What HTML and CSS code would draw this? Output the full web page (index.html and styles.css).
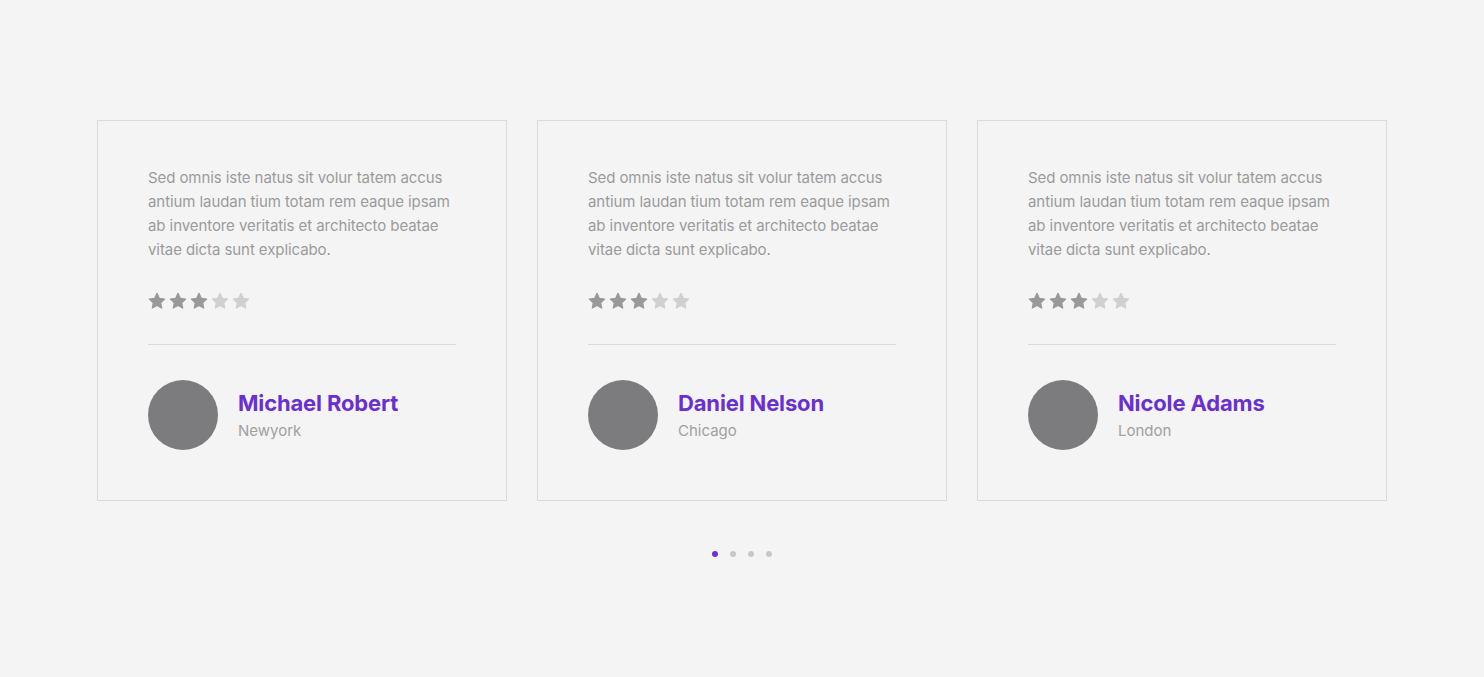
FILE: index.html
```html
<!DOCTYPE html>
<html lang="en">
<head>
<meta charset="utf-8">
<title>Testimonials</title>
<link rel="stylesheet" href="styles.css">
</head>
<body>
<svg width="0" height="0" class="defs" aria-hidden="true">
  <defs>
    <symbol id="star" viewBox="0 0 24 24">
      <path d="M12 1.8l3.1 6.6 7.1.9-5.3 5 1.4 7.1L12 17.9l-6.3 3.5 1.4-7.1-5.3-5 7.1-.9z" stroke-linejoin="round" stroke-width="1.6" stroke="currentColor" fill="currentColor"/>
    </symbol>
  </defs>
</svg>
<main class="section">
  <div class="cards">
    <article class="card">
      <p class="quote">Sed omnis iste natus sit volur tatem accus antium laudan tium totam rem eaque ipsam ab inventore veritatis et architecto beatae vitae dicta sunt explicabo.</p>
      <div class="stars">
        <svg class="star on"><use href="#star"/></svg><svg class="star on"><use href="#star"/></svg><svg class="star on"><use href="#star"/></svg><svg class="star"><use href="#star"/></svg><svg class="star"><use href="#star"/></svg>
      </div>
      <div class="author">
        <div class="avatar"></div>
        <div class="info">
          <h3 class="name">Michael Robert</h3>
          <span class="city">Newyork</span>
        </div>
      </div>
    </article>
    <article class="card">
      <p class="quote">Sed omnis iste natus sit volur tatem accus antium laudan tium totam rem eaque ipsam ab inventore veritatis et architecto beatae vitae dicta sunt explicabo.</p>
      <div class="stars">
        <svg class="star on"><use href="#star"/></svg><svg class="star on"><use href="#star"/></svg><svg class="star on"><use href="#star"/></svg><svg class="star"><use href="#star"/></svg><svg class="star"><use href="#star"/></svg>
      </div>
      <div class="author">
        <div class="avatar"></div>
        <div class="info">
          <h3 class="name">Daniel Nelson</h3>
          <span class="city">Chicago</span>
        </div>
      </div>
    </article>
    <article class="card">
      <p class="quote">Sed omnis iste natus sit volur tatem accus antium laudan tium totam rem eaque ipsam ab inventore veritatis et architecto beatae vitae dicta sunt explicabo.</p>
      <div class="stars">
        <svg class="star on"><use href="#star"/></svg><svg class="star on"><use href="#star"/></svg><svg class="star on"><use href="#star"/></svg><svg class="star"><use href="#star"/></svg><svg class="star"><use href="#star"/></svg>
      </div>
      <div class="author">
        <div class="avatar"></div>
        <div class="info">
          <h3 class="name">Nicole Adams</h3>
          <span class="city">London</span>
        </div>
      </div>
    </article>
  </div>
  <div class="dots">
    <span class="dot active"></span><span class="dot"></span><span class="dot"></span><span class="dot"></span>
  </div>
</main>
</body>
</html>
```

FILE: styles.css
```css
* { box-sizing: border-box; }
html, body {
  margin: 0;
  padding: 0;
  background: #f4f4f4;
  font-family: Inter, "Noto Sans", sans-serif;
}
.defs { position: absolute; width: 0; height: 0; overflow: hidden; }
.section {
  padding-top: 120px;
  display: flex;
  flex-direction: column;
  align-items: center;
}
.cards {
  display: flex;
  gap: 30px;
}
.card {
  width: 410px;
  height: 381px;
  border: 1px solid #dadada;
  padding: 45px 50px 50px;
  display: flex;
  flex-direction: column;
}
.quote {
  margin: 0;
  font-size: 15px;
  line-height: 24px;
  color: #9b9b9b;
  letter-spacing: -0.08px;
}
.stars {
  display: flex;
  gap: 3px;
  margin-top: 30px;
  padding-bottom: 34px;
  border-bottom: 1px solid #d9d9d9;
}
.star {
  width: 18px;
  height: 18px;
  color: #d0d0d0;
}
.star.on { color: #999999; }
.author {
  display: flex;
  align-items: center;
  gap: 20px;
  margin-top: 35px;
}
.avatar {
  width: 70px;
  height: 70px;
  border-radius: 50%;
  background: #7c7c7e;
}
.info {
  display: flex;
  flex-direction: column;
}
.name {
  margin: 0 0 3px;
  font-size: 22px;
  line-height: 28px;
  font-weight: 700;
  color: #6a2fd3;
  letter-spacing: -0.15px;
}
.city {
  font-size: 15px;
  line-height: 22px;
  color: #a0a0a0;
}
.dots {
  display: flex;
  gap: 12px;
  margin-top: 50px;
}
.dot {
  width: 6px;
  height: 6px;
  border-radius: 50%;
  background: #c8c8c8;
}
.dot.active { background: #6b2fd8; }
```
